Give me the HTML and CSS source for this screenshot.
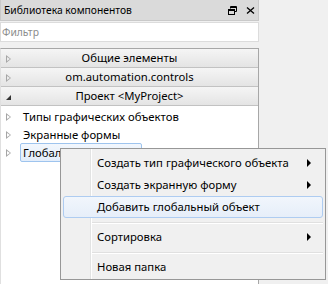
FILE: index.html
```html
<!DOCTYPE html>
<html lang="ru">
<head>
    <meta charset="UTF-8">
    <title>Библиотека компонентов</title>
    <link rel="stylesheet" href="styles.css">
</head>
<body>
    <div class="panel">
        <div class="panel-header">
            <span class="panel-title">Библиотека компонентов</span>
            <span class="panel-tools">
                <svg width="9" height="9" viewBox="0 0 9 9">
                    <path d="M2.5 0.5h6v5h-2M2.5 0.5v2" fill="none" stroke="#000"/>
                    <path d="M2.5 1.5h6" stroke="#000"/>
                    <rect x="0.5" y="3.5" width="6" height="5" fill="none" stroke="#000"/>
                    <path d="M0.5 4.5h6" stroke="#000"/>
                </svg>
                <svg width="9" height="9" viewBox="0 0 9 9">
                    <path d="M1 1.5l7 6M8 1.5l-7 6" stroke="#000" stroke-width="1.3"/>
                </svg>
            </span>
        </div>
        <div class="filter">Фильтр</div>

        <div class="groups">
            <div class="group"><span class="arrow closed"></span>Общие элементы</div>
            <div class="group"><span class="arrow closed"></span>om.automation.controls</div>
            <div class="group"><span class="arrow open"></span>Проект &lt;MyProject&gt;</div>
            <ul class="tree">
                <li class="tree-item"><span class="arrow closed"></span><span class="label">Типы графических объектов</span></li>
                <li class="tree-item"><span class="arrow closed"></span><span class="label">Экранные формы</span></li>
                <li class="tree-item selected"><span class="arrow closed"></span><span class="label">Глобальные объекты</span></li>
            </ul>
        </div>
    </div>

    <div class="menu">
        <div class="menu-item sub">Создать тип графического объекта</div>
        <div class="menu-item sub">Создать экранную форму</div>
        <div class="menu-item hover">Добавить глобальный объект</div>
        <div class="menu-sep"></div>
        <div class="menu-item sub">Сортировка</div>
        <div class="menu-sep"></div>
        <div class="menu-item">Новая папка</div>
    </div>
</body>
</html>
```

FILE: styles.css
```css
body {
    margin: 0;
    background: #f0f0f0;
    font-family: "Noto Sans", sans-serif;
    font-size: 11.3px;
    color: #000;
    width: 328px;
    height: 284px;
    overflow: hidden;
}
.panel {
    width: 259px;
    height: 284px;
    display: flex;
    flex-direction: column;
}
.panel-header {
    height: 20px;
    background: #dadada;
    border: 1px solid #c9c9c9;
    border-top: none;
    display: flex;
    align-items: center;
    justify-content: space-between;
    padding: 0 3px 0 3px;
    font-size: 10.3px;
}
.panel-tools {
    display: flex;
    gap: 9px;
    align-items: center;
}
.panel-tools svg {
    display: block;
}
.filter {
    height: 18px;
    line-height: 18px;
    margin-top: 1px;
    background: #fff;
    border: 1px solid #dcdcdc;
    padding-left: 1px;
    color: #8c8c8c;
    font-size: 10.3px;
}
.groups {
    margin-top: 6px;
    flex: 1;
    background: #fff;
    border: 1px solid #a7a7a7;
    border-bottom: none;
    border-left-color: #e0e0e0;
}
.group {
    position: relative;
    height: 18px;
    line-height: 18px;
    text-align: center;
    background: linear-gradient(#f5f5f5, #e4e4e4);
    border-bottom: 1px solid #c2c2c2;
}
.arrow {
    position: absolute;
    left: 5px;
    top: 6px;
    width: 0;
    height: 0;
}
.arrow.closed {
    border-left: 5px solid #a6a6a6;
    border-top: 4px solid transparent;
    border-bottom: 4px solid transparent;
}
.arrow.closed::after {
    content: "";
    position: absolute;
    left: -4px;
    top: -2px;
    border-left: 3px solid #fff;
    border-top: 2px solid transparent;
    border-bottom: 2px solid transparent;
}
.group .arrow.closed::after {
    border-left-color: #ededed;
}
.arrow.open {
    top: 8px;
    border-right: 5px solid #333;
    border-top: 5px solid transparent;
}
.tree {
    list-style: none;
    margin: 0;
    padding: 1px 0 0;
}
.tree-item {
    position: relative;
    height: 18px;
    line-height: 18px;
    padding-left: 19px;
}
.tree-item .label {
    display: inline-block;
    padding: 0 2px;
    border: 1px solid transparent;
    line-height: 17px;
}
.tree-item.selected {
    height: 20px;
}
.tree-item.selected .label {
    background: linear-gradient(#f2f7fd, #e3edfa);
    border-color: #9ec4ee;
    border-radius: 2px;
}
.menu {
    position: absolute;
    left: 60px;
    top: 148px;
    width: 262px;
    padding: 3px 1px 1px;
    background: #f0f0f0;
    border: 1px solid #979797;
    background-image: linear-gradient(to right, transparent 29px, #e2e3e3 29px, #e2e3e3 30px, #fff 30px, #fff 31px, transparent 31px);
}
.menu-item {
    position: relative;
    height: 20px;
    line-height: 20px;
    padding-left: 33px;
    border: 1px solid transparent;
    margin: 0 1px;
    border-radius: 3px;
}
.menu-item.sub::after {
    content: "";
    position: absolute;
    right: 11px;
    top: 6px;
    border-left: 4px solid #000;
    border-top: 4px solid transparent;
    border-bottom: 4px solid transparent;
}
.menu-item.hover {
    background: linear-gradient(#f1f6fc, #e6eef9);
    border-color: #aeccf1;
}
.menu-sep {
    height: 1px;
    margin: 4px 1px 2px 30px;
    background: #e0e0e0;
    border-bottom: 1px solid #fff;
}
```
